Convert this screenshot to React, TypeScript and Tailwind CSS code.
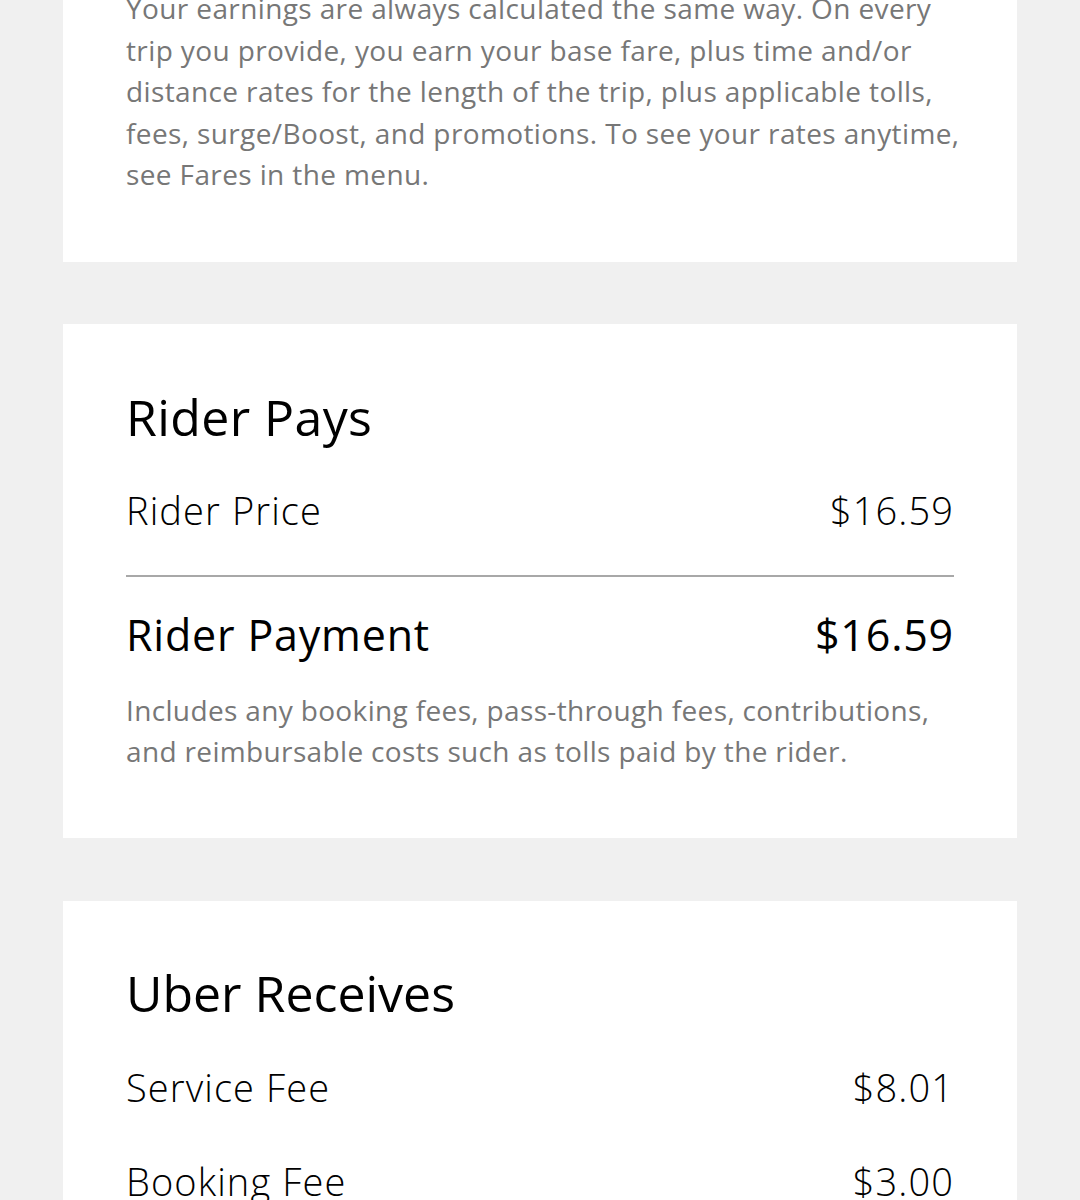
import React from "react";

const font = { fontFamily: '"Open Sans", "Noto Sans", sans-serif' };

const earningsLines = [
  "Your earnings are always calculated the same way. On every",
  "trip you provide, you earn your base fare, plus time and/or",
  "distance rates for the length of the trip, plus applicable tolls,",
  "fees, surge/Boost, and promotions. To see your rates anytime,",
  "see Fares in the menu.",
];

const Row = ({ label, value, className = "" }: { label: string; value: string; className?: string }) => (
  <div
    className={`flex items-start justify-between text-[38px] leading-none font-light tracking-[1.1px] text-black ${className}`}
  >
    <span>{label}</span>
    <span>{value}</span>
  </div>
);

const App = () => {
  return (
    <div className="h-[1200px] overflow-hidden bg-[#f0f0f0] px-[63px]" style={font}>
      {/* earnings explanation, top cut off */}
      <div className="-mt-[12px] bg-white px-[63px] pb-[66px]">
        <p className="text-[28px] leading-[41.5px] tracking-[0.38px] text-[#777]">
          {earningsLines.map((line) => (
            <span key={line} className="block whitespace-nowrap">
              {line}
            </span>
          ))}
        </p>
      </div>

      {/* rider pays */}
      <div className="mt-[62px] bg-white px-[63px] pt-[68px] pb-[65px]">
        <h2 className="text-[50px] leading-none font-normal tracking-[0.4px] text-black">Rider Pays</h2>
        <Row label="Rider Price" value="$16.59" className="mt-[49px]" />
        <div className="mt-[46px] h-[2px] bg-[#a8a8a8]" />
        <div className="mt-[36px] flex items-start justify-between text-[43px] leading-none font-medium tracking-[0.8px] text-black">
          <span>Rider Payment</span>
          <span>$16.59</span>
        </div>
        <p className="mt-[34px] text-[28px] leading-[41.5px] tracking-[0.35px] text-[#777]">
          Includes any booking fees, pass-through fees, contributions, and reimbursable costs such
          as tolls paid by the rider.
        </p>
      </div>

      {/* uber receives */}
      <div className="mt-[63px] bg-white px-[63px] pt-[67px] pb-[65px]">
        <h2 className="text-[50px] leading-none font-normal text-black">Uber Receives</h2>
        <Row label="Service Fee" value="$8.01" className="mt-[50px]" />
        <Row label="Booking Fee" value="$3.00" className="mt-[56px]" />
      </div>
    </div>
  );
};

export default App;
